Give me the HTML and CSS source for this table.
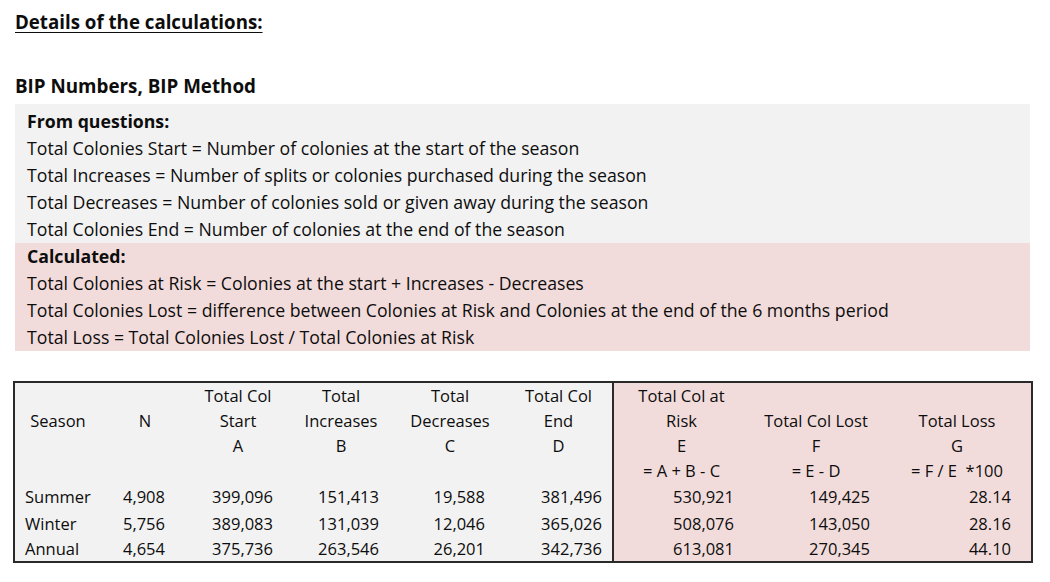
FILE: index.html
```html
<!DOCTYPE html>
<html>
<head>
<meta charset="utf-8">
<link rel="stylesheet" href="styles.css">
</head>
<body>
<div class="page">
  <h1 class="title">Details of the calculations:</h1>
  <h2 class="subtitle">BIP Numbers, BIP Method</h2>
  <div class="box">
    <div class="sect grey">
      <div class="line bold">From questions:</div>
      <div class="line">Total Colonies Start = Number of colonies at the start of the season</div>
      <div class="line">Total Increases = Number of splits or colonies purchased during the season</div>
      <div class="line">Total Decreases = Number of colonies sold or given away during the season</div>
      <div class="line">Total Colonies End = Number of colonies at the end of the season</div>
    </div>
    <div class="sect pink">
      <div class="line bold">Calculated:</div>
      <div class="line">Total Colonies at Risk = Colonies at the start + Increases - Decreases</div>
      <div class="line">Total Colonies Lost = difference between Colonies at Risk and Colonies at the end of the 6 months period</div>
      <div class="line">Total Loss = Total Colonies Lost / Total Colonies at Risk</div>
    </div>
  </div>
  <table class="data">
    <colgroup>
      <col class="c1"><col class="c2"><col class="c3"><col class="c4"><col class="c5"><col class="c6"><col class="c7"><col class="c8"><col class="c9">
    </colgroup>
    <thead>
      <tr class="h">
        <th></th><th></th><th>Total Col</th><th>Total</th><th>Total</th><th>Total Col</th><th class="pk first">Total Col at</th><th class="pk"></th><th class="pk"></th>
      </tr>
      <tr class="h">
        <th>Season</th><th>N</th><th>Start</th><th>Increases</th><th>Decreases</th><th>End</th><th class="pk first">Risk</th><th class="pk">Total Col Lost</th><th class="pk">Total Loss</th>
      </tr>
      <tr class="h">
        <th></th><th></th><th>A</th><th>B</th><th>C</th><th>D</th><th class="pk first">E</th><th class="pk">F</th><th class="pk">G</th>
      </tr>
      <tr class="h">
        <th></th><th></th><th></th><th></th><th></th><th></th><th class="pk first">= A + B - C</th><th class="pk">= E - D</th><th class="pk">= F / E &nbsp;*100</th>
      </tr>
    </thead>
    <tbody>
      <tr class="r">
        <td class="name">Summer</td><td>4,908</td><td>399,096</td><td>151,413</td><td>19,588</td><td>381,496</td><td class="pk first">530,921</td><td class="pk">149,425</td><td class="pk">28.14</td>
      </tr>
      <tr class="r">
        <td class="name">Winter</td><td>5,756</td><td>389,083</td><td>131,039</td><td>12,046</td><td>365,026</td><td class="pk first">508,076</td><td class="pk">143,050</td><td class="pk">28.16</td>
      </tr>
      <tr class="r last">
        <td class="name">Annual</td><td>4,654</td><td>375,736</td><td>263,546</td><td>26,201</td><td>342,736</td><td class="pk first">613,081</td><td class="pk">270,345</td><td class="pk">44.10</td>
      </tr>
    </tbody>
  </table>
</div>
</body>
</html>
```
FILE: styles.css
```css
html, body {
  margin: 0;
  padding: 0;
  background: #ffffff;
}
body {
  font-family: "Open Sans", Lato, "Liberation Sans", sans-serif;
  color: #0d0d0d;
  font-size: 17.7px;
}
.page {
  width: 1050px;
  height: 582px;
  overflow: hidden;
}
.title {
  margin: 0;
  padding: 10px 0 0 15px;
  font-size: 18.7px;
  font-weight: 700;
  text-decoration: underline;
  text-underline-offset: 3px;
  line-height: 24px;
}
.subtitle {
  margin: 0;
  padding: 40px 0 0 15px;
  font-size: 18.8px;
  font-weight: 700;
  line-height: 24px;
}
.box {
  margin: 6px 20px 0 15px;
}
.sect {
  padding: 0 0 0 12px;
}
.grey {
  background: #f2f2f2;
  padding-top: 4px;
}
.pink {
  background: #f2dcdb;
}
.line {
  line-height: 27px;
  height: 27px;
  white-space: nowrap;
}
.bold {
  font-weight: 700;
}
.data {
  margin: 30px 0 0 13px;
  border-collapse: collapse;
  border: 2px solid #2a2a2a;
  background: #f2f2f2;
  table-layout: fixed;
  width: 1018px;
  font-size: 16.5px;
}
.c1 { width: 87px; }
.c2 { width: 88px; }
.c3 { width: 98px; }
.c4 { width: 108px; }
.c5 { width: 110px; }
.c6 { width: 108px; }
.c7 { width: 136px; }
.c8 { width: 134px; }
.c9 { width: 149px; }
.data th {
  font-weight: 400;
  text-align: center;
  padding: 0;
  height: 25px;
  line-height: 25px;
  white-space: nowrap;
}
.data td {
  text-align: right;
  padding: 0;
  height: 27px;
  line-height: 27px;
  white-space: nowrap;
}
.data .pk {
  background: #f2dcdb;
}
.data .first {
  border-left: 2px solid #2a2a2a;
}
.data td.name { text-align: left; padding-left: 10px; }
.data td:nth-child(2) { padding-right: 24px; }
.data td:nth-child(3) { padding-right: 14px; }
.data td:nth-child(4) { padding-right: 16px; }
.data td:nth-child(5) { padding-right: 20px; }
.data td:nth-child(6) { padding-right: 10px; }
.data td:nth-child(7) { padding-right: 15px; }
.data td:nth-child(8) { padding-right: 13px; }
.data td:nth-child(9) { padding-right: 20px; }
.r.last td { height: 24px; line-height: 24px; }
```
